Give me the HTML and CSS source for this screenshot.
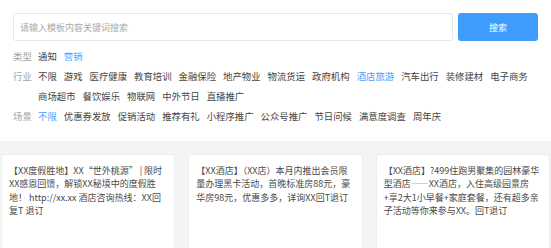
FILE: index.html
```html
<!DOCTYPE html>
<html lang="zh-CN">
<head>
  <meta charset="UTF-8">
  <meta name="viewport" content="width=device-width, initial-scale=1.0">
  <title>模板搜索</title>
  <link rel="stylesheet" href="styles.css">
</head>
<body>
  <div class="search-bar">
    <input class="search-input" type="text" placeholder="请输入模板内容关键词搜索">
    <button class="search-btn">搜索</button>
  </div>

  <div class="filters">
    <div class="filter-row">
      <span class="filter-label">类型</span>
      <ul class="filter-list">
        <li>通知</li>
        <li class="active">营销</li>
      </ul>
    </div>
    <div class="filter-row">
      <span class="filter-label">行业</span>
      <ul class="filter-list">
        <li>不限</li>
        <li>游戏</li>
        <li>医疗健康</li>
        <li>教育培训</li>
        <li>金融保险</li>
        <li>地产物业</li>
        <li>物流货运</li>
        <li>政府机构</li>
        <li class="active">酒店旅游</li>
        <li>汽车出行</li>
        <li>装修建材</li>
        <li>电子商务</li>
        <li>商场超市</li>
        <li>餐饮娱乐</li>
        <li>物联网</li>
        <li>中外节日</li>
        <li>直播推广</li>
      </ul>
    </div>
    <div class="filter-row">
      <span class="filter-label">场景</span>
      <ul class="filter-list">
        <li class="active">不限</li>
        <li>优惠券发放</li>
        <li>促销活动</li>
        <li>推荐有礼</li>
        <li>小程序推广</li>
        <li>公众号推广</li>
        <li>节日问候</li>
        <li>满意度调查</li>
        <li>周年庆</li>
      </ul>
    </div>
  </div>

  <div class="templates">
    <div class="card">【XX度假胜地】XX“世外桃源” | 限时<br>XX感恩回馈，解锁XX秘境中的度假胜<br>地！ http://xx.xx 酒店咨询热线：XX回<br>复T 退订</div>
    <div class="card">【XX酒店】（XX店）本月内推出会员限<br>量办理黑卡活动，首晚标准房88元，豪<br>华房98元，优惠多多，详询XX回T退订</div>
    <div class="card">【XX酒店】?499住跑男聚集的园林豪华<br>型酒店——XX酒店，入住高级园景房<br>+享2大1小早餐+家庭套餐，还有超多亲<br>子活动等你来参与XX。回T退订</div>
  </div>
</body>
</html>
```

FILE: styles.css
```css
body {
  margin: 0;
  background-color: #fff;
  font-family: "Noto Sans CJK SC", "Liberation Sans", sans-serif;
  font-size: 9.4px;
  color: #444;
}
.search-bar {
  display: flex;
  gap: 5px;
  padding: 13px 13px 0;
}
.search-input {
  flex: 1;
  height: 28px;
  box-sizing: border-box;
  border: 1px solid #e6e6e6;
  border-radius: 3px;
  padding: 0 6px;
  font-family: inherit;
  font-size: 9px;
  color: #333;
  outline: none;
}
.search-input::placeholder {
  color: #aaa;
}
.search-btn {
  width: 80px;
  height: 28px;
  border: none;
  border-radius: 3px;
  background-color: #3e9cfd;
  color: #fff;
  font-family: inherit;
  font-size: 9px;
  cursor: pointer;
}
.filters {
  margin-top: 5px;
  padding: 0 13px;
}
.filter-row {
  display: flex;
  line-height: 20px;
}
.filter-label {
  width: 25px;
  flex-shrink: 0;
  color: #a3a3a3;
}
.filter-list {
  display: flex;
  flex-wrap: wrap;
  column-gap: 7px;
  margin: 0;
  padding: 0;
  list-style: none;
}
.filter-list li {
  cursor: pointer;
}
.filter-list .active {
  color: #4a9ffc;
}
.templates {
  display: grid;
  grid-template-columns: repeat(3, 1fr);
  gap: 13px;
  margin-top: 15px;
  padding: 13px 1px;
  background-color: #f4f4f4;
}
.card {
  min-height: 110px;
  padding: 9px 5px 9px 7px;
  background-color: #fff;
  border: 1px solid #ececec;
  border-radius: 3px;
  font-size: 9px;
  line-height: 13.4px;
  color: #4a4a4a;
  white-space: nowrap;
  overflow: hidden;
}
```
